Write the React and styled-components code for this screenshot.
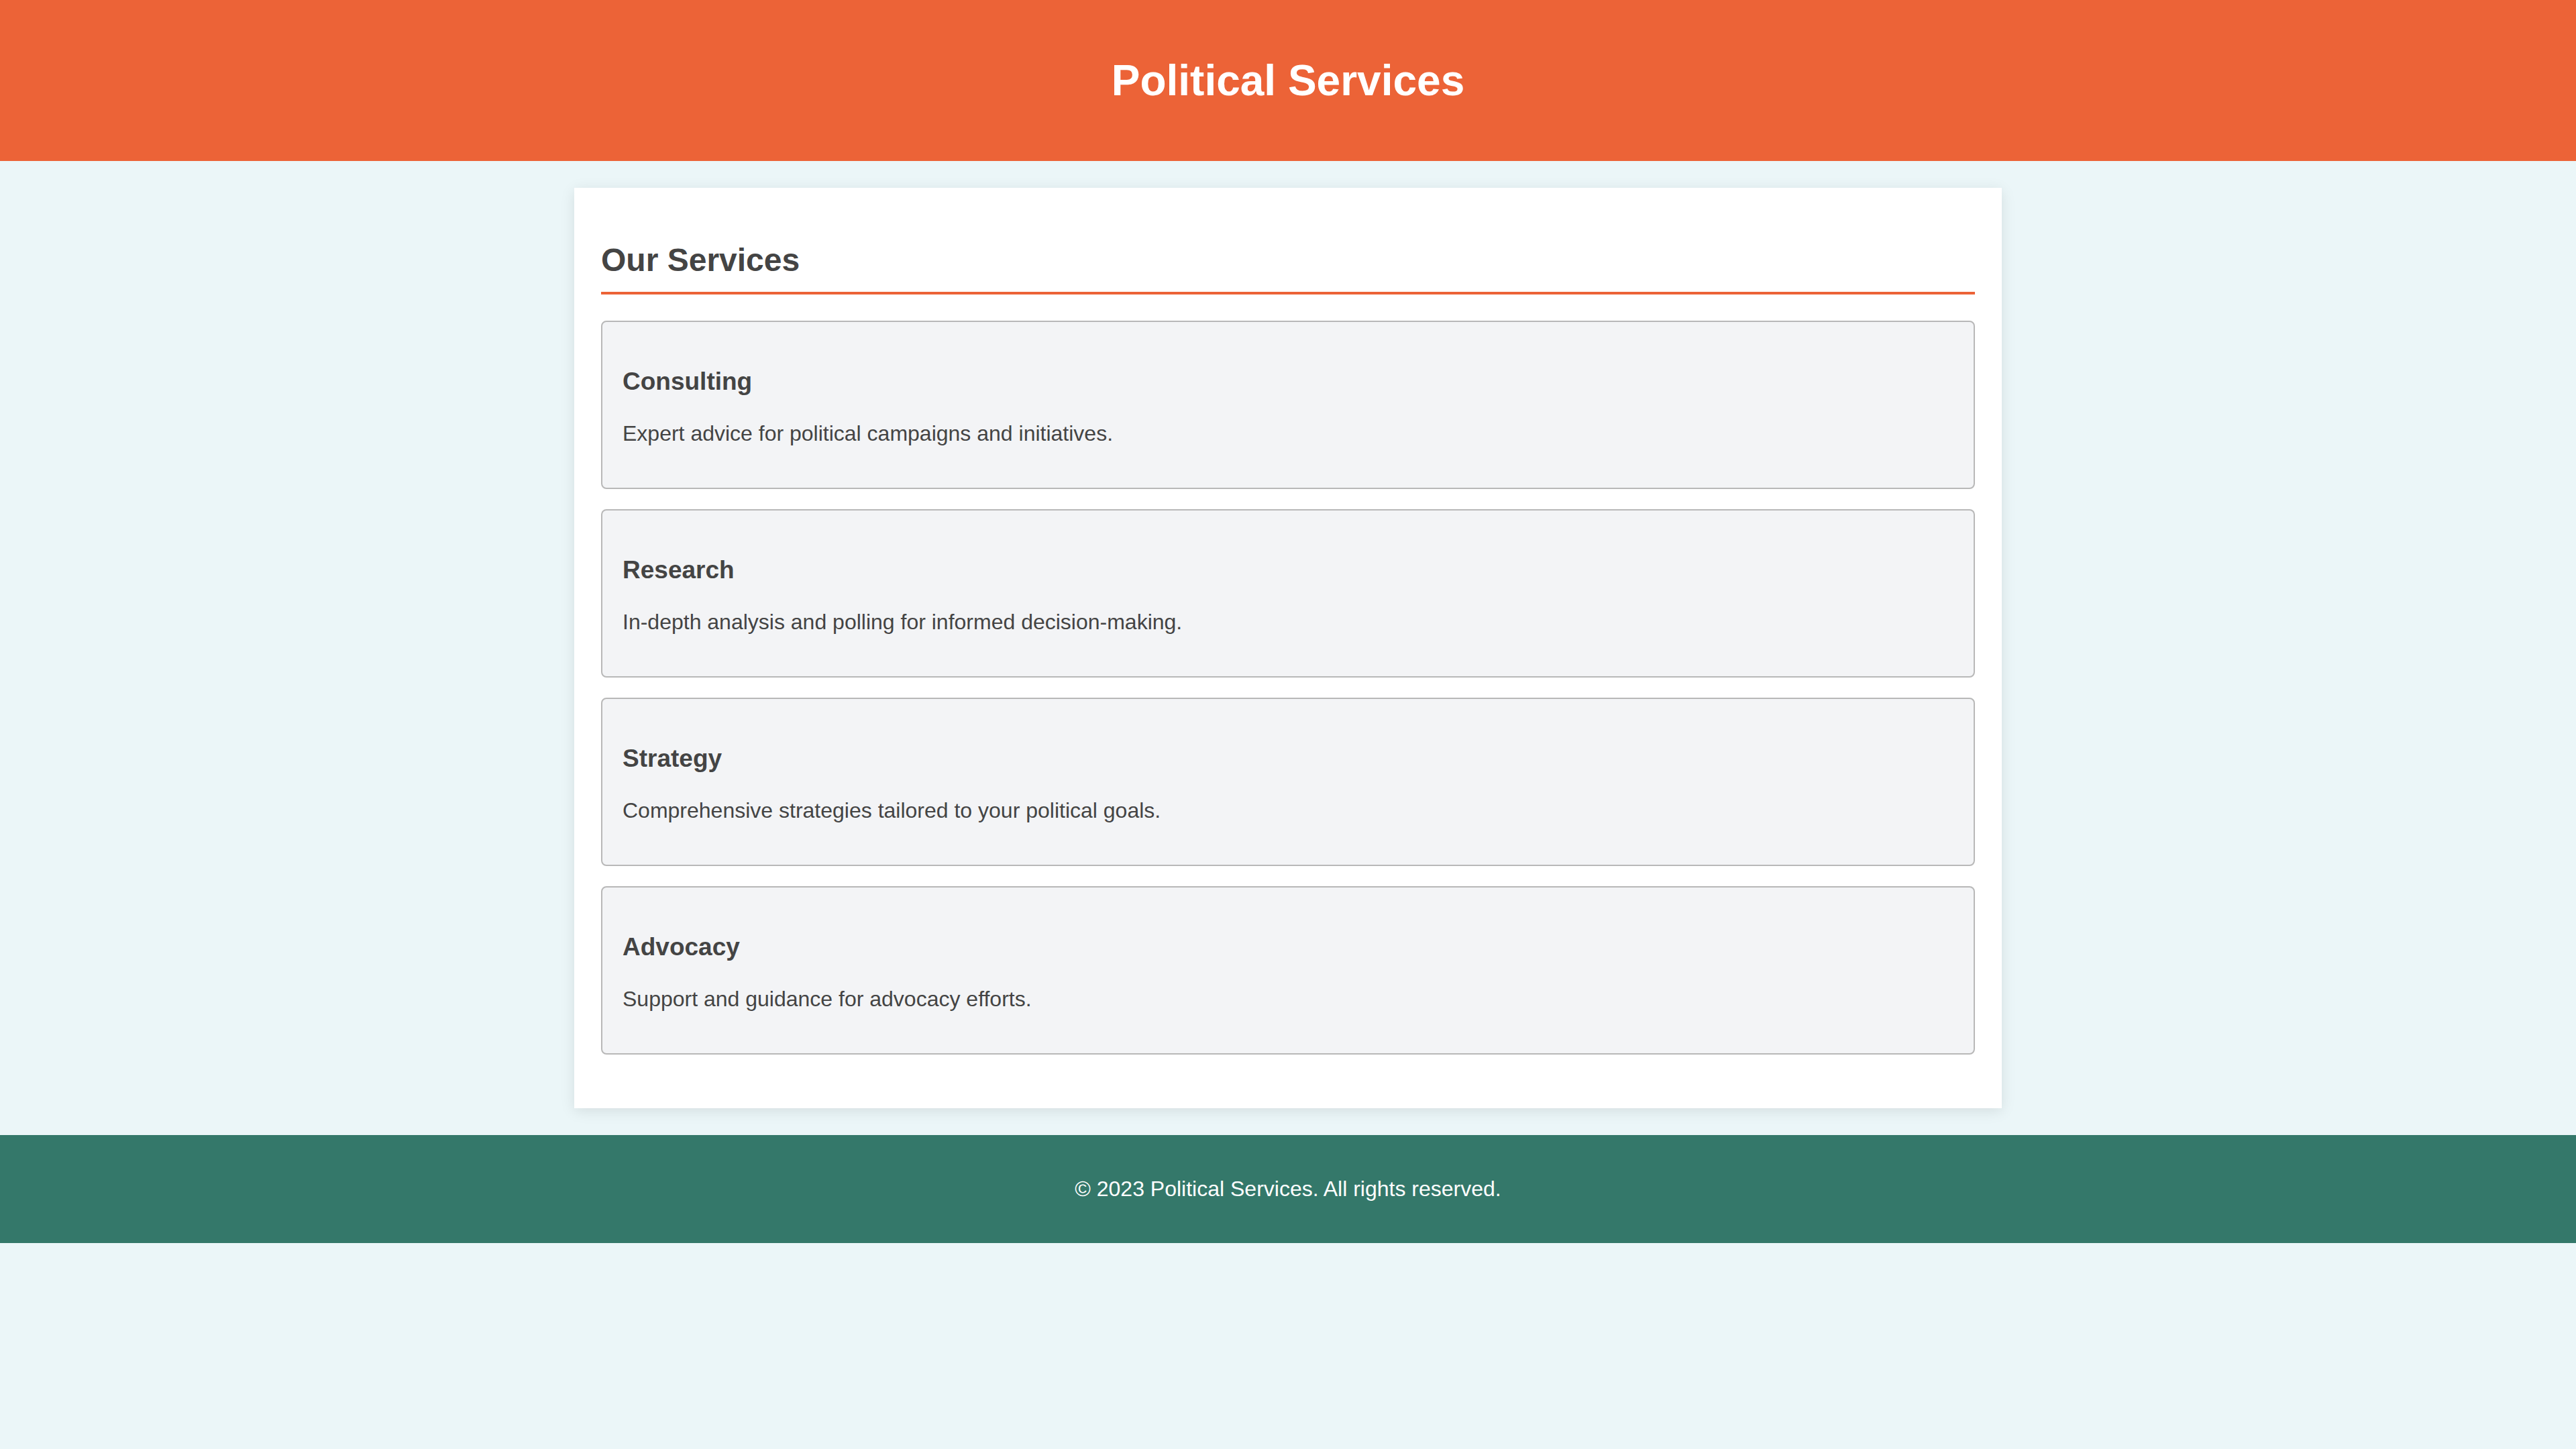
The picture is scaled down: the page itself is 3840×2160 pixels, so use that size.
import React from "react";
import styled, { createGlobalStyle } from "styled-components";

const colors = {
  accent: "#ec6337",
  page: "#ebf6f8",
  panel: "#ffffff",
  card: "#f3f4f6",
  border: "#b8b8b8",
  text: "#444444",
  footer: "#34786a",
};

const GlobalStyle = createGlobalStyle`
  body {
    margin: 0;
    background: ${colors.page};
    color: ${colors.text};
    font-family: "Liberation Sans", Arial, sans-serif;
    font-size: 32px;
    line-height: 37px;
  }
`;

const Header = styled.header`
  padding: 83px 40px;
  background: ${colors.accent};
  color: #ffffff;
  text-align: center;
`;

const Title = styled.h1`
  margin: 0;
  font-size: 64px;
  line-height: 74px;
`;

const Main = styled.main`
  box-sizing: border-box;
  max-width: 2128px;
  margin: 40px auto;
  padding: 80px 40px;
  background: ${colors.panel};
  box-shadow: 0 4px 20px rgba(0, 0, 0, 0.1);
`;

const SectionTitle = styled.h2`
  margin: 0 0 39px;
  padding-bottom: 20px;
  border-bottom: 4px solid ${colors.accent};
  font-size: 48px;
  line-height: 55px;
`;

const ServiceList = styled.div`
  display: flex;
  flex-direction: column;
  gap: 30px;
`;

const Card = styled.article`
  padding: 67px 30px 62px;
  border: 2px solid ${colors.border};
  border-radius: 8px;
  background: ${colors.card};
`;

const CardTitle = styled.h3`
  margin: 0 0 38px;
  font-size: 37px;
  line-height: 43px;
`;

const CardText = styled.p`
  margin: 0;
`;

const Footer = styled.footer`
  padding: 62px 30px;
  background: ${colors.footer};
  color: #ffffff;
  text-align: center;
`;

const FooterText = styled.p`
  margin: 0;
`;

const services = [
  { name: "Consulting", text: "Expert advice for political campaigns and initiatives." },
  { name: "Research", text: "In-depth analysis and polling for informed decision-making." },
  { name: "Strategy", text: "Comprehensive strategies tailored to your political goals." },
  { name: "Advocacy", text: "Support and guidance for advocacy efforts." },
];

export default function App() {
  return (
    <>
      <GlobalStyle />
      <Header>
        <Title>Political Services</Title>
      </Header>
      <Main>
        <section aria-labelledby="services-title">
          <SectionTitle id="services-title">Our Services</SectionTitle>
          <ServiceList>
            {services.map((service) => (
              <Card key={service.name}>
                <CardTitle>{service.name}</CardTitle>
                <CardText>{service.text}</CardText>
              </Card>
            ))}
          </ServiceList>
        </section>
      </Main>
      <Footer>
        <FooterText>© 2023 Political Services. All rights reserved.</FooterText>
      </Footer>
    </>
  );
}
